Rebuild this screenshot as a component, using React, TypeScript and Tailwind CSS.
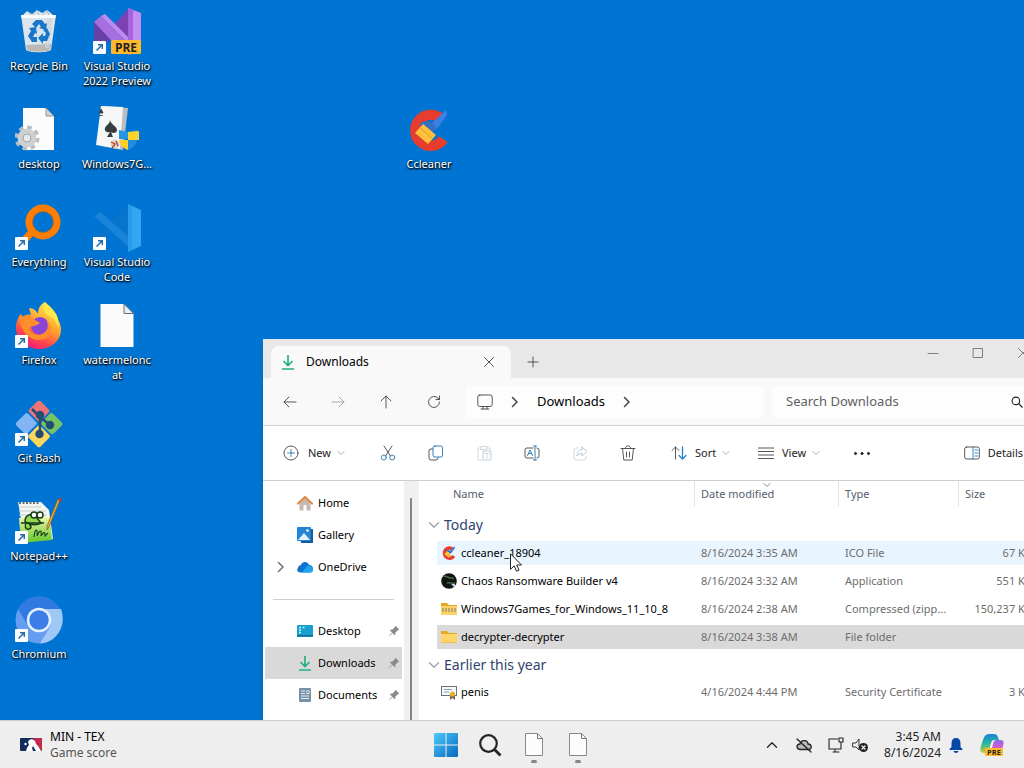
import type { ReactNode } from "react";

type P = { children?: ReactNode };

/* ---------- shared line icon ---------- */
function Line({ children, className = "size-4" }: P & { className?: string }) {
  return (
    <svg viewBox="0 0 16 16" fill="none" stroke="currentColor" strokeWidth=".9" strokeLinecap="round" strokeLinejoin="round" className={`${className} shrink-0`} aria-hidden="true">
      {children}
    </svg>
  );
}

const ChevronDown = ({ className = "size-2 text-gray-400" }: { className?: string }) => (
  <Line className={className}>
    <path d="M2 5l6 6 6-6" strokeWidth="1.700" />
  </Line>
);
const ChevronRight = ({ className = "size-3" }: { className?: string }) => (
  <Line className={className}>
    <path d="M5.500 3.500L10 8l-4.500 4.500" strokeWidth="1.500" />
  </Line>
);

/* ---------- desktop icons ---------- */
function Big({ children }: P) {
  return (
    <svg viewBox="0 0 48 48" className="size-12 shrink-0" aria-hidden="true">
      {children}
    </svg>
  );
}
const Shortcut = () => (
  <g>
    <rect x="0" y="33" width="13" height="13" rx="1" fill="#fafcff" />
    <path d="M3.500 42.500L9 37M5 36.700h4.300V41" stroke="#2b6ea6" strokeWidth="1.500" fill="none" />
  </g>
);

const RecycleBin = () => (
  <Big>
    <path d="M7 8l5-5 5 3 5-4 5 3 5-3 5 4 3 5z" fill="#dfe7ec" />
    <path d="M12 3l5 5 5-6 3 7 7-6 3 6" fill="none" stroke="#a9b7c0" />
    <path d="M6 7h35l-5 35c-3 3-22 3-25 0z" fill="#e4eaee" opacity=".96" />
    <path d="M6 7h35l-.6 3H6.500z" fill="#f8fafb" />
    <path d="M11 37l25-1-.8 6c-4 2-19 2-23 0z" fill="#bcb9b4" />
    <path d="M32 10h6l-4 30h-4z" fill="#cfd7dc" opacity=".7" />
    <g fill="#1976c8">
      <path d="M17 16l4-4h6l3 4 2-1-1 7-7-2 2-1-2-3-3 4z" />
      <path d="M14 20l7-1 1 7-2-1-2 4h4v5h-5l-4-6 3-5z" />
      <path d="M28 22l4-2 3 6-3 7h-4v3l-5-6 5-5v3h2l1-3z" />
    </g>
  </Big>
);
const VisualStudio = () => (
  <Big>
    <path d="M1 14v22l8 3 13-12z" fill="#6740a5" />
    <path d="M20 18L35 1v40H22z" fill="#7b42b4" />
    <path d="M1 14l7-6 28 28v10l-8-3z" fill="#a66fe0" />
    <path d="M8 8l28 28v-6L12 6z" fill="#bd8bef" />
    <path d="M35 0l13 5v38l-13 4z" fill="#c68df4" />
    <path d="M35 0v47l5-1V2z" fill="#a365df" />
    <rect x="18" y="32" width="30" height="14" rx="1.500" fill="#ffb92c" />
    <text x="33" y="43.500" textAnchor="middle" fontFamily="Open Sans, sans-serif" fontWeight="700" fontSize="12" fill="#222">PRE</text>
    <Shortcut />
  </Big>
);
const DesktopIni = () => (
  <Big>
    <path d="M8 2h23l8 8v34H8z" fill="#fcfcfc" />
    <path d="M31 2l8 8h-8z" fill="#cdd5da" stroke="#7b8790" strokeWidth=".8" />
    <circle cx="12" cy="32" r="10" fill="none" stroke="#b6bcc0" strokeWidth="5" strokeDasharray="4.200 3.650" />
    <circle cx="12" cy="32" r="6.500" fill="none" stroke="#cdd1d4" strokeWidth="6" />
    <circle cx="12" cy="32" r="4" fill="#e8eaeb" stroke="#9fa5a9" />
  </Big>
);
const Games = () => (
  <Big>
    <path d="M10 0l25 2-5 42-22-4z" fill="#b9bec2" />
    <path d="M8 0l22 1-3 42-24-4z" fill="#f5f6f6" />
    <path d="M17 14c1 5 7 6 7 10 0 3-4 4-6 2l2 5h-6l3-5c-3 1-6-1-5-4 1-3 5-4 5-8z" fill="#373c40" />
    <path d="M8 3l2 4H6zM6.500 9.500h3" fill="#333" stroke="#444" />
    <path d="M26 24l9 2 9-2v9H26z" fill="#2495e0" />
    <path d="M35 26l11-1v9H35z" fill="#ffd42e" />
    <path d="M26 34h9v10c-5-2-8-5-9-10z" fill="#ffcf25" />
    <path d="M35 34h9c-1 5-4 8-9 10z" fill="#218ddb" />
    <circle cx="22" cy="38" r="4.500" fill="#e0d3c8" />
    <path d="M18 36l4 2-3 4m4-7l2 5" stroke="#b2462c" strokeWidth="1.300" fill="none" />
  </Big>
);
const Everything = () => (
  <Big>
    <path d="M16 29L3 43" stroke="#ff7d00" strokeWidth="7" />
    <circle cx="28" cy="18" r="14" fill="none" stroke="#ff7d00" strokeWidth="7" />
    <circle cx="28" cy="18" r="10.400" fill="none" stroke="#ab661b" strokeWidth=".8" />
    <Shortcut />
  </Big>
);
const VSCode = () => (
  <Big>
    <path d="M35 1L19 18 7 8 1 12l13 11L1 34l6 4 12-10 16 18z" fill="#0875cc" />
    <path d="M1 12l6-4 29 25v10z" fill="#1784d9" />
    <path d="M35 0l13 6v36l-13 6z" fill="#35a5f1" />
    <path d="M35 0l4 2v44l-4 2z" fill="#279bea" />
    <Shortcut />
  </Big>
);
const Firefox = () => (
  <Big>
    <defs>
      <linearGradient id="fox" x1=".75" y1="0" x2=".25" y2="1">
        <stop stopColor="#fff04a" />
        <stop offset=".48" stopColor="#ff9a2e" />
        <stop offset=".75" stopColor="#ff454e" />
        <stop offset="1" stopColor="#ed1685" />
      </linearGradient>
    </defs>
    <path d="M6 12l2 3c3-3 6-3 8-2l-2-7c4 0 7 2 9 6 0-6 3-10 7-12l2 6c3 2 5 4 6 8 4 1 8 7 8 13 0 13-11 20-22 20S1 39 1 26c0-6 2-11 5-14z" fill="url(#fox)" />
    <circle cx="25" cy="24" r="9" fill="#8944d8" />
    <path d="M5 17c7-7 12-3 15 1l5 3c-4 4-9 2-11 5 1 6 9 9 15 5 4-3 5-8 2-13 9 7 5 20-7 20-10 0-18-8-19-21z" fill="#ff8d29" />
    <path d="M30 0c9 8 16 14 13 28 0-7-4-12-9-14-4-3-7-6-4-14z" fill="#ffe84a" />
    <Shortcut />
  </Big>
);
const BlankFile = () => (
  <Big>
    <path d="M7.500 2h24l9 9v34h-33z" fill="#fbfbfb" />
    <path d="M31 2l9.500 9.500H31z" fill="#e8eef4" stroke="#5e7183" strokeWidth="1" />
  </Big>
);
const GitBash = () => (
  <Big>
    <g transform="rotate(45 24 24)">
      <rect x="7" y="7" width="15.500" height="15.500" rx="2" fill="#ed7475" />
      <rect x="24.500" y="7" width="16.500" height="15.500" rx="2" fill="#ed7475" />
      <rect x="7" y="7" width="15.500" height="15.500" rx="2" fill="#ed7475" />
      <rect x="7" y="24.500" width="15.500" height="16.500" rx="2" fill="#83b5f4" />
      <rect x="24.500" y="24.500" width="16.500" height="16.500" rx="2" fill="#fbd75c" />
      <rect x="24.500" y="7" width="16.500" height="15.500" rx="2" fill="#72c465" />
    </g>
    <g stroke="#234d72" strokeWidth="2.500" fill="#234d72">
      <path d="M17 9l8 8v18M25 17l10 8" fill="none" />
      <circle cx="25" cy="15" r="3" />
      <circle cx="35" cy="25" r="3" />
      <circle cx="24.500" cy="34" r="3" />
    </g>
    <Shortcut />
  </Big>
);
const NotepadPP = () => (
  <Big>
    <defs>
      <linearGradient id="npp" x1="0" y1="0" x2="0" y2="1">
        <stop stopColor="#edf5a7" />
        <stop offset="1" stopColor="#5fc727" />
      </linearGradient>
    </defs>
    <path d="M3 4h23l8 8 4 29-28 3z" fill="#f4f6f4" />
    <path d="M4 5h20" stroke="#65736d" strokeDasharray="2 1.500" strokeWidth="2" />
    <path d="M4 9h22M4 13h27M4 17h28" stroke="#c4cfca" />
    <path d="M4 20l31-1 2 23-31 3z" fill="url(#npp)" />
    <g fill="none" stroke="#183d18" strokeWidth="1.500">
      <path d="M12 24c-3 3-2 8 2 7 3-1 2-5 0-4M10 24c0-9 8-9 12-4l4 5c-5 3-10 2-16-1z" fill="#97d74b" />
      <path d="M6 25h23" />
      <circle cx="19" cy="17" r="3" fill="#fff" />
      <circle cx="25" cy="17" r="3" fill="#fff" />
      <path d="M19 39c1-9 4-9 3-1 3-7 5-6 4 0 3-5 4-4 4 0l3-3" strokeWidth="1.100" />
    </g>
    <path d="M45 2L34 29l-2 3v-4L43 1z" fill="#e9ac38" stroke="#7f5a29" strokeWidth=".7" />
    <path d="M43 1l2-2 2 2-2 4z" fill="#a8423c" />
    <Shortcut />
  </Big>
);
const Chromium = () => (
  <Big>
    <circle cx="24" cy="24" r="23.500" fill="#659df0" />
    <path d="M3 13C13-4 35-4 45 13H24L12 28z" fill="#2f79e0" />
    <path d="M24 13h22c6 17-5 34-21 34.500L36 29z" fill="#a0c8f6" />
    <circle cx="24" cy="24" r="11" fill="#3d7de8" stroke="#e2f0ff" strokeWidth="2.500" />
    <Shortcut />
  </Big>
);
const CCleanerShape = () => (
  <g>
    <path d="M40 34A18 18 0 1 1 37 10" fill="none" stroke="#e63d2e" strokeWidth="12" transform="translate(4 4) scale(.86)" />
    <path d="M41 4l1 5-10 14-6-5z" fill="#3e7fe4" />
    <path d="M15 18c5-5 10-4 17 4l-4 4-14-7z" fill="#386fc4" />
    <path d="M18 18l13 11-8 9-13-11z" fill="#ffc13b" />
    <path d="M15 22l12 10" stroke="#dd9933" />
  </g>
);
const CCleaner = () => (
  <Big>
    <CCleanerShape />
  </Big>
);

const shortcuts = [
  { name: "Recycle Bin", Icon: RecycleBin, place: "col-start-1 row-start-1" },
  { name: "desktop", Icon: DesktopIni, place: "col-start-1 row-start-2" },
  { name: "Everything", Icon: Everything, place: "col-start-1 row-start-3" },
  { name: "Firefox", Icon: Firefox, place: "col-start-1 row-start-4" },
  { name: "Git Bash", Icon: GitBash, place: "col-start-1 row-start-5" },
  { name: "Notepad++", Icon: NotepadPP, place: "col-start-1 row-start-6" },
  { name: "Chromium", Icon: Chromium, place: "col-start-1 row-start-7" },
  { name: "Visual Studio 2022 Preview", Icon: VisualStudio, place: "col-start-2 row-start-1" },
  { name: "Windows7G...", Icon: Games, place: "col-start-2 row-start-2" },
  { name: "Visual Studio Code", Icon: VSCode, place: "col-start-2 row-start-3" },
  { name: "watermeloncat", Icon: BlankFile, place: "col-start-2 row-start-4" },
  { name: "Ccleaner", Icon: CCleaner, place: "col-start-6 row-start-2" },
];

/* ---------- small icons ---------- */
function Small({ children }: P) {
  return (
    <svg viewBox="0 0 16 16" className="size-4 shrink-0" aria-hidden="true">
      {children}
    </svg>
  );
}
const DownloadIcon = () => (
  <Small>
    <path d="M8 1v10M3.500 7L8 11.500 12.500 7M2 15h12" fill="none" stroke="#27ad80" strokeWidth="1.700" />
  </Small>
);
const HomeIcon = () => (
  <Small>
    <path d="M2.500 7L8 2l5.500 5v8.500h-4V10h-3v5.500h-4z" fill="#c9b9b5" />
    <path d="M1 8.500L8 2l7 6.500" fill="none" stroke="#df8c42" strokeWidth="2.200" strokeLinejoin="round" strokeLinecap="round" />
  </Small>
);
const GalleryIcon = () => (
  <Small>
    <path d="M3 2h13v14H4z" fill="#155b9e" />
    <rect width="14" height="14" rx="1" fill="#2485d6" />
    <path d="M1 13l6-7 6 7z" fill="#e1f4ff" />
    <circle cx="10.500" cy="3.500" r="1.300" fill="#fff" />
  </Small>
);
const CloudIcon = () => (
  <Small>
    <path d="M1 9c0-2 2-3 3-3 1-4 7-4 8 0 3 0 4 2 4 4s-1 3.500-3 3.500H3.500C1 13.500-1 11 1 9z" fill="#0b72cf" />
    <path d="M5 13.500L10 7c3-1 6 1 6 3.500 0 2-1 3-3 3z" fill="#22a4ec" />
  </Small>
);
const DesktopIcon = () => (
  <Small>
    <rect y="2" width="16" height="12" rx="1" fill="#189fd0" />
    <path d="M0 12h16v1.500H0z" fill="#136b9c" />
    <path d="M2 4.500h2M2 7h2M2 9.500h2M5.500 4.500h2" stroke="#c5f5ff" strokeWidth="1.300" />
  </Small>
);
const DocumentsIcon = () => (
  <Small>
    <rect x="2" y="1" width="12" height="14" rx="1" fill="#7890a5" />
    <path d="M4 4h4M4 6.500h4M4 9h8M4 11.500h8M10 4h2v2.500h-2z" stroke="#e4eff7" strokeWidth="1.200" />
  </Small>
);
const Pin = () => (
  <svg viewBox="0 0 16 16" className="ml-auto size-3 shrink-0" aria-hidden="true">
    <path d="M10 1l5 5-2 1-3 3-.5 4L6 10.500 1.500 15 1 14.500 5.500 10 2 6.500 6 6l3-3z" fill="#878b8e" />
  </svg>
);

const CCleanerSmall = () => (
  <svg viewBox="0 0 48 48" className="size-4 shrink-0" aria-hidden="true">
    <CCleanerShape />
  </svg>
);
const ChaosIcon = () => (
  <Small>
    <circle cx="8" cy="8" r="7.800" fill="#101512" />
    <path d="M2 3c5 0 6 3 11 2M6 10c3-1 5 1 8 0" stroke="#496b48" strokeWidth="1.500" fill="none" />
    <path d="M10 11h4v4z" fill="#bcd0e6" />
  </Small>
);
const FolderIcon = () => (
  <Small>
    <path d="M0 2h6l2 2h8v10H0z" fill="#e5a823" />
    <path d="M0 5h16v8.500H0z" fill="#ffd56a" />
  </Small>
);
const ZipIcon = () => (
  <Small>
    <path d="M0 2h6l2 2h8v10H0z" fill="#e5a823" />
    <path d="M0 5h16v9H0z" fill="#fbd56b" />
    <path d="M1 8h14M1 10h14" stroke="#81785d" strokeDasharray="2 1" strokeWidth="1.200" />
  </Small>
);
const CertificateIcon = () => (
  <Small>
    <rect x=".5" y="2.500" width="15" height="9" fill="#f4f8fb" stroke="#68727a" />
    <path d="M3 5.500h8M3 8h5" stroke="#8fa4b5" />
    <path d="M9 11h5v5l-2.500-2L9 16z" fill="#75664c" />
    <circle cx="11.500" cy="10" r="2.600" fill="#e3b32f" />
  </Small>
);

type FileRow = { name: string; date: string; type: string; size: string; Icon: () => ReactNode; bg: string };
const groups: { title: string; rows: FileRow[] }[] = [
  {
    title: "Today",
    rows: [
      { name: "ccleaner_18904", date: "8/16/2024 3:35 AM", type: "ICO File", size: "67 KB", Icon: CCleanerSmall, bg: "bg-[#e8f4fe]" },
      { name: "Chaos Ransomware Builder v4", date: "8/16/2024 3:32 AM", type: "Application", size: "551 KB", Icon: ChaosIcon, bg: "" },
      { name: "Windows7Games_for_Windows_11_10_8", date: "8/16/2024 2:38 AM", type: "Compressed (zipp...", size: "150,237 KB", Icon: ZipIcon, bg: "" },
      { name: "decrypter-decrypter", date: "8/16/2024 3:38 AM", type: "File folder", size: "", Icon: FolderIcon, bg: "bg-[#d9d9d9]" },
    ],
  },
  {
    title: "Earlier this year",
    rows: [{ name: "penis", date: "4/16/2024 4:44 PM", type: "Security Certificate", size: "3 KB", Icon: CertificateIcon, bg: "" }],
  },
];

function SideItem({ label, icon, selected = false, pinned = false, expandable = false }: { label: string; icon: ReactNode; selected?: boolean; pinned?: boolean; expandable?: boolean }) {
  return (
    <a href="#" className={`mx-0.5 flex h-8 items-center gap-[5px] pr-[2px] pl-2 text-[11px] text-black ${selected ? "bg-[#d9d9d9]" : ""}`}>
      <span className="w-[19px] text-gray-500">{expandable && <ChevronRight className="size-4" />}</span>
      {icon}
      <span className="whitespace-nowrap">{label}</span>
      {pinned && <Pin />}
    </a>
  );
}

function ToolButton({ label, className = "text-[#444]", children }: P & { label: string; className?: string }) {
  return (
    <button aria-label={label} className={`flex size-8 shrink-0 items-center justify-center ${className}`}>
      {children}
    </button>
  );
}

function Explorer() {
  return (
    <section aria-label="Downloads" className="absolute top-[339px] -right-[21px] bottom-0 left-[263px] flex flex-col overflow-hidden border-t border-[#d8eefc] bg-white text-[11px] text-[#222] shadow-md">
      <header className="flex h-[38px] shrink-0 items-end border-t border-[#f5e2dc] bg-[#e8e8e8] pl-2">
        <div className="flex h-8 w-60 items-center rounded-t-lg bg-[#f9f9f9] pr-3.5 pl-[9px]">
          <DownloadIcon />
          <span className="ml-2.5 text-xs text-black">Downloads</span>
          <button aria-label="Close tab" className="ml-auto text-[#444]">
            <Line><path d="M3.500 3.500l9 9m0-9l-9 9" /></Line>
          </button>
        </div>
        <ToolButton label="New tab" className="ml-1.5 text-[#444]">
          <Line><path d="M8 3v10M3 8h10" /></Line>
        </ToolButton>
        <div className="ml-auto flex self-start text-gray-500">
          <button aria-label="Minimize" className="flex h-6 w-[45px] items-center justify-center"><Line><path d="M3 8.500h10" /></Line></button>
          <button aria-label="Maximize" className="flex h-6 w-[45px] items-center justify-center"><Line><path d="M3.500 3.500h9v9h-9z" /></Line></button>
          <button aria-label="Close" className="flex h-6 w-[45px] items-center justify-center"><Line><path d="M3.500 3.500l9 9m0-9l-9 9" /></Line></button>
        </div>
      </header>

      <div className="flex h-12 shrink-0 items-center border-b border-[#d5d5d5] bg-[#f9f9f9] pr-2 pl-[11px]">
        <div className="flex gap-4">
          <ToolButton label="Back"><Line><path d="M14 8H2m5-5L2 8l5 5" /></Line></ToolButton>
          <ToolButton label="Forward" className="text-gray-400"><Line><path d="M2 8h12M9 3l5 5-5 5" /></Line></ToolButton>
          <ToolButton label="Up"><Line><path d="M8 14V2M3 7l5-5 5 5" /></Line></ToolButton>
          <ToolButton label="Refresh"><Line><path d="M13.500 8A5.500 5.500 0 1 1 12 4.200L13.500 5.500M13.500 2v3.500H10" /></Line></ToolButton>
        </div>
        <div className="ml-4 flex h-8 min-w-0 flex-1 items-center rounded bg-[#fdfdfd] pl-[11px] text-[#444]">
          <Line className="size-4"><rect x=".8" y="1" width="14.400" height="11.500" rx="2" /><path d="M6 12.500V15m4-2.500V15M4 15h8" /></Line>
          <ChevronRight className="ml-3.5 size-4" />
          <span className="ml-3.5 text-[13px] text-black">Downloads</span>
          <ChevronRight className="ml-3.5 size-4" />
        </div>
        <label className="ml-2 flex h-8 w-[265px] items-center rounded bg-[#fdfdfd] px-3.5">
          <input type="text" aria-label="Search Downloads" placeholder="Search Downloads" className="min-w-0 flex-1 bg-transparent text-[13px] outline-none placeholder:text-[#5f5f5f]" />
          <Line className="size-3"><circle cx="6.500" cy="6.500" r="5" strokeWidth="1.500" /><path d="M10 10l5 5" strokeWidth="1.500" /></Line>
        </label>
      </div>

      <div role="toolbar" aria-label="Commands" className="flex h-[55px] shrink-0 items-center border-b border-[#cfcfcf] bg-white pr-[22px] pl-5">
        <button className="flex w-[73px] items-center"><Line className="size-4 text-[#444]"><circle cx="8" cy="8" r="7" /><path d="M8 4.500v7M4.500 8h7" stroke="#2878a8" /></Line><span className="mr-1.5 ml-[9px]">New</span><ChevronDown /></button>
        <div className="ml-4 flex gap-4">
          <ToolButton label="Cut"><Line><path d="M4 1l6.500 10M12 1L5.500 11" /><circle cx="3.800" cy="12.500" r="2.500" stroke="#2878a8" /><circle cx="12.200" cy="12.500" r="2.500" stroke="#2878a8" /></Line></ToolButton>
          <ToolButton label="Copy"><Line><path d="M4.500 4H3a2 2 0 0 0-2 2v7a2 2 0 0 0 2 2h5a2 2 0 0 0 2-2" /><rect x="5" y="1" width="9.500" height="11" rx="1.800" stroke="#1675ad" /></Line></ToolButton>
          <ToolButton label="Paste" className="text-gray-300"><Line><path d="M5 3H2v12h4M11 3h3v3M5 1.500h6v3H5z" /><rect x="7" y="6" width="8" height="9" rx="1" stroke="#b7cbd5" /><path d="M8.500 8.500h5m-2.500 0V13" /></Line></ToolButton>
          <ToolButton label="Rename"><Line><path d="M9 3H3a2 2 0 0 0-2 2v6a2 2 0 0 0 2 2h6M13 3a2 2 0 0 1 2 2v6a2 2 0 0 1-2 2" /><path d="M11 1v14M9.500 1h3m-3 14h3M3.500 10.500L6 5l2.500 5.500M4.500 8.500h3" stroke="#1976ad" /></Line></ToolButton>
          <ToolButton label="Share" className="text-gray-300"><Line><path d="M6 3H4a2 2 0 0 0-2 2v8a2 2 0 0 0 2 2h8a2 2 0 0 0 2-2v-2" /><path d="M10 2l5 4.500-5 4.500V8.500c-3 0-4 1-5 2.500 0-4 2-6.500 5-6.500z" stroke="#a8c5d5" /></Line></ToolButton>
          <ToolButton label="Delete"><Line><path d="M1 3.500h14M5.500 3C5.500 0 10.500 0 10.500 3M2.500 3.500l1.300 11.500h8.400l1.300-11.500M6.500 7v5m3-5v5" /></Line></ToolButton>
        </div>
        <button className="ml-[27px] flex w-[59px] items-center"><Line className="size-4 text-[#444]"><path d="M4.500 14V2M1 5.500L4.500 2 8 5.500" /><path d="M11.500 2v12M8 10.500l3.500 3.500 3.500-3.500" stroke="#2382bd" strokeWidth="1.300" /></Line><span className="mr-1.5 ml-2">Sort</span><ChevronDown /></button>
        <button className="ml-7 flex w-[62px] items-center"><Line className="size-4 text-[#444]"><path d="M0 3h16M0 6.500h16M0 10h16M0 13.500h16" /></Line><span className="mr-1.5 ml-2">View</span><ChevronDown /></button>
        <ToolButton label="More" className="ml-[26px]"><Line><g fill="currentColor"><circle cx="1.500" cy="8.500" r="1.100" /><circle cx="8" cy="8.500" r="1.100" /><circle cx="14.500" cy="8.500" r="1.100" /></g></Line></ToolButton>
        <button className="ml-auto flex items-center gap-2"><Line className="size-4 text-[#444]"><rect x=".7" y="2" width="14.600" height="12" rx="2" /><path d="M9 2v12M11 5h2.500M11 8h2.500M11 11h2.500" stroke="#1d7ec0" /></Line>Details</button>
      </div>

      <div className="flex min-h-0 flex-1">
        <nav aria-label="Folders" className="w-[141px] shrink-0 pt-1.5">
          <SideItem label="Home" icon={<HomeIcon />} />
          <SideItem label="Gallery" icon={<GalleryIcon />} />
          <SideItem label="OneDrive" icon={<CloudIcon />} expandable />
          <hr className="mx-2.5 mt-4 mb-[15px] h-px border-0 bg-[#d0d0d0]" />
          <SideItem label="Desktop" icon={<DesktopIcon />} pinned />
          <SideItem label="Downloads" icon={<DownloadIcon />} selected pinned />
          <SideItem label="Documents" icon={<DocumentsIcon />} pinned />
        </nav>
        <div className="flex w-3.5 shrink-0 justify-center bg-[#f0f0f0] pt-[17px]"><div className="w-0.5 bg-[#858585]" /></div>
        <div className="min-w-0 flex-1 overflow-hidden border-l border-[#f2f2f2]">
          <table className="w-full table-fixed border-separate border-spacing-0 whitespace-nowrap text-[#6d6d6d]">
            <colgroup>
              <col className="w-[18px]" /><col className="w-[257px]" /><col className="w-36" /><col className="w-[120px]" /><col className="w-20" /><col />
            </colgroup>
            <thead>
              <tr className="h-[26px] text-left text-[#56606e]">
                <td />
                <th scope="col" className="pl-4 font-normal">Name</th>
                <th scope="col" className="relative border-l border-[#e2e2e2] pl-1.5 font-normal">Date modified<ChevronDown className="absolute top-0 left-[68px] size-2 text-gray-500" /></th>
                <th scope="col" className="border-l border-[#e2e2e2] pl-1.5 font-normal">Type</th>
                <th scope="col" className="border-l border-[#e2e2e2] pl-1.5 font-normal">Size</th>
                <td />
              </tr>
            </thead>
            {groups.map((g, i) => (
              <tbody key={g.title}>
                <tr className={i === 0 ? "h-8" : "h-[27px]"}>
                  <th colSpan={6} scope="rowgroup" className={`pl-[9px] text-left font-normal text-[#31436f] ${i === 0 ? "pt-1" : ""}`}>
                    <span className="flex items-center gap-1 text-sm"><ChevronDown className="size-3 text-gray-400" />{g.title}</span>
                  </th>
                </tr>
                {g.rows.map((r) => (
                  <tr key={r.name} className="h-7">
                    <td />
                    <td className={`border-y-2 border-transparent bg-clip-padding pl-1 text-black ${r.bg}`}><span className="flex items-center gap-1"><r.Icon />{r.name}</span></td>
                    <td className={`border-y-2 border-transparent bg-clip-padding pl-[7px] ${r.bg}`}>{r.date}</td>
                    <td className={`border-y-2 border-transparent bg-clip-padding pl-[7px] ${r.bg}`}>{r.type}</td>
                    <td className={`border-y-2 border-transparent bg-clip-padding pr-1.5 text-right ${r.bg}`}>{r.size}</td>
                    <td className={`border-y-2 border-transparent bg-clip-padding ${r.bg}`} />
                  </tr>
                ))}
              </tbody>
            ))}
          </table>
        </div>
      </div>
    </section>
  );
}

const TaskFile = () => (
  <svg viewBox="0 0 20 32" className="h-8 w-5" aria-hidden="true">
    <path d="M1.500 1.500h12l5 5v17h-17z" fill="#fcfcfc" stroke="#888" />
    <path d="M13.500 1.500v5h5" fill="none" stroke="#777" />
    <rect x="7" y="28" width="6" height="3" rx="1.500" fill="#858585" />
  </svg>
);

function Taskbar() {
  return (
    <footer className="grid h-12 shrink-0 grid-cols-[1fr_auto_1fr] items-center border-t border-[#c9ccd0] bg-[#eeeeee] text-xs text-[#222]">
      <button className="flex items-center gap-2 pl-5 text-left leading-4">
        <svg viewBox="0 0 22 13" className="h-[13px] w-[22px]" aria-hidden="true">
          <rect width="22" height="13" rx="1" fill="#132c5d" />
          <path d="M13 0h8l1 1v11l-1 1h-4z" fill="#c42a4c" />
          <path d="M6 13c1-4 2-5 3-6l-1-3 1-2 3-1 3 2 1 3 2 2 3 5h-5l-3-5-1 2 1 3z" fill="#fff" />
          <circle cx="5.500" cy="6" r="1.200" fill="#fff" />
        </svg>
        <span><span className="block text-black">MIN - TEX</span><span className="block text-[#555]">Game score</span></span>
      </button>
      <div className="flex items-center gap-4">
        <button aria-label="Start" className="flex w-7 justify-center">
          <svg viewBox="0 0 24 24" className="size-6" aria-hidden="true"><defs><linearGradient id="win" x2="1" y2="1"><stop stopColor="#4ccafa" /><stop offset="1" stopColor="#0868bd" /></linearGradient></defs><path d="M0 1q0-1 1-1h10.500v11.500H0zm12.500-1H23q1 0 1 1v10.500H12.500zM0 12.500h11.500V24H1q-1 0-1-1zm12.500 0H24V23q0 1-1 1H12.500z" fill="url(#win)" /></svg>
        </button>
        <button aria-label="Search" className="flex w-7 justify-center">
          <svg viewBox="0 0 24 24" className="size-6" fill="none" stroke="#242424" strokeWidth="2.200" aria-hidden="true"><circle cx="10.500" cy="10.500" r="8.300" /><path d="M16.500 16.500l6 6" strokeWidth="2.800" /></svg>
        </button>
        <button aria-label="File window 1" className="flex w-7 justify-center pt-1.5"><TaskFile /></button>
        <button aria-label="File window 2" className="flex w-7 justify-center pt-1.5"><TaskFile /></button>
      </div>
      <div className="flex items-center justify-end pr-5">
        <button aria-label="Show hidden icons"><Line className="size-3"><path d="M2 11l6-6 6 6" strokeWidth="1.700" /></Line></button>
        <button aria-label="OneDrive" className="ml-[18px]"><Line><path d="M4 12.500C0 12 0 7 4 7c1-5 8-4 8 0 4 0 4 5 1 5.500z" fill="#b8b8b8" strokeWidth="1.300" /><path d="M1 2l14 13" strokeWidth="1.300" /></Line></button>
        <button aria-label="Network" className="ml-4"><Line><path d="M9.500 2H1v10h12V9M5 15h6M7 12v3M11 1h4v4h-4zM13 5v4" strokeWidth="1.100" /></Line></button>
        <button aria-label="Volume muted" className="ml-2"><Line><path d="M1 6h3l3-4v11l-3-3H1z" /><circle cx="11.500" cy="10.500" r="4.500" fill="#222" stroke="none" /><path d="M10 9l3 3m0-3l-3 3" stroke="#fff" strokeWidth="1.200" /></Line></button>
        <time className="ml-4 text-right leading-4"><span className="block">3:45 AM</span><span className="block">8/16/2024</span></time>
        <button aria-label="Notifications" className="ml-[7px]"><Small><path d="M8 1c-3 0-4.500 2-4.500 5v4L1.500 12v1h13v-1l-2-2V6c0-3-1.500-5-4.500-5zM5.500 14h5c-.5 2.500-4.500 2.500-5 0z" fill="#0648a8" /></Small></button>
        <button aria-label="Copilot" className="ml-4">
          <svg viewBox="0 0 24 24" className="size-6" aria-hidden="true">
            <defs><linearGradient id="cop1" x2="0" y2="1"><stop stopColor="#1982d9" /><stop offset=".5" stopColor="#28b89b" /><stop offset="1" stopColor="#c8cd35" /></linearGradient><linearGradient id="cop2" x2="0" y2="1"><stop stopColor="#846af0" /><stop offset=".5" stopColor="#d75dce" /><stop offset="1" stopColor="#f18b62" /></linearGradient></defs>
            <path d="M6 2c1-1 3-1 8-1 4 0 4 4 5 6h-5c-3 0-3 4-5 10-1 3-3 3-5 3-5 0-4-5-2-10 1-3 2-7 4-8z" fill="url(#cop1)" />
            <path d="M14 7h6c5 0 4 4 2 9-1 4-2 6-6 6H8c3 0 3-3 4-7 1-3 1-7 4-8z" fill="url(#cop2)" />
            <rect x="5" y="15" width="18" height="8" rx="1" fill="#ffbd2e" />
            <text x="14" y="22" textAnchor="middle" fontFamily="Open Sans, sans-serif" fontWeight="700" fontSize="7.500" fill="#2b2419">PRE</text>
          </svg>
        </button>
      </div>
    </footer>
  );
}

export default function App() {
  return (
    <div className="flex h-screen flex-col overflow-hidden font-['Noto_Sans',sans-serif]">
      <main className="relative min-h-0 flex-1 overflow-hidden bg-[#0074d2]">
        <div className="grid auto-rows-[98px] grid-cols-[repeat(auto-fill,78px)]">
          {shortcuts.map(({ name, Icon, place }) => (
            <button key={name} className={`flex flex-col items-center pt-2 ${place}`}>
              <Icon />
              <span className="mt-0.5 w-[72px] text-center text-[11px] leading-[15px] wrap-break-word text-white [text-shadow:1px_1px_2px_#000,0_1px_2px_#000]">{name}</span>
            </button>
          ))}
        </div>
        <Explorer />
        <svg viewBox="0 0 12 19" className="absolute top-[553px] left-[510px] h-[19px] w-3" aria-hidden="true">
          <path d="M.5.800v15.500l3.700-3.400 2.300 5.300 2.500-1.100-2.300-5.100h4.800z" fill="#fff" stroke="#222" />
        </svg>
      </main>
      <Taskbar />
    </div>
  );
}
